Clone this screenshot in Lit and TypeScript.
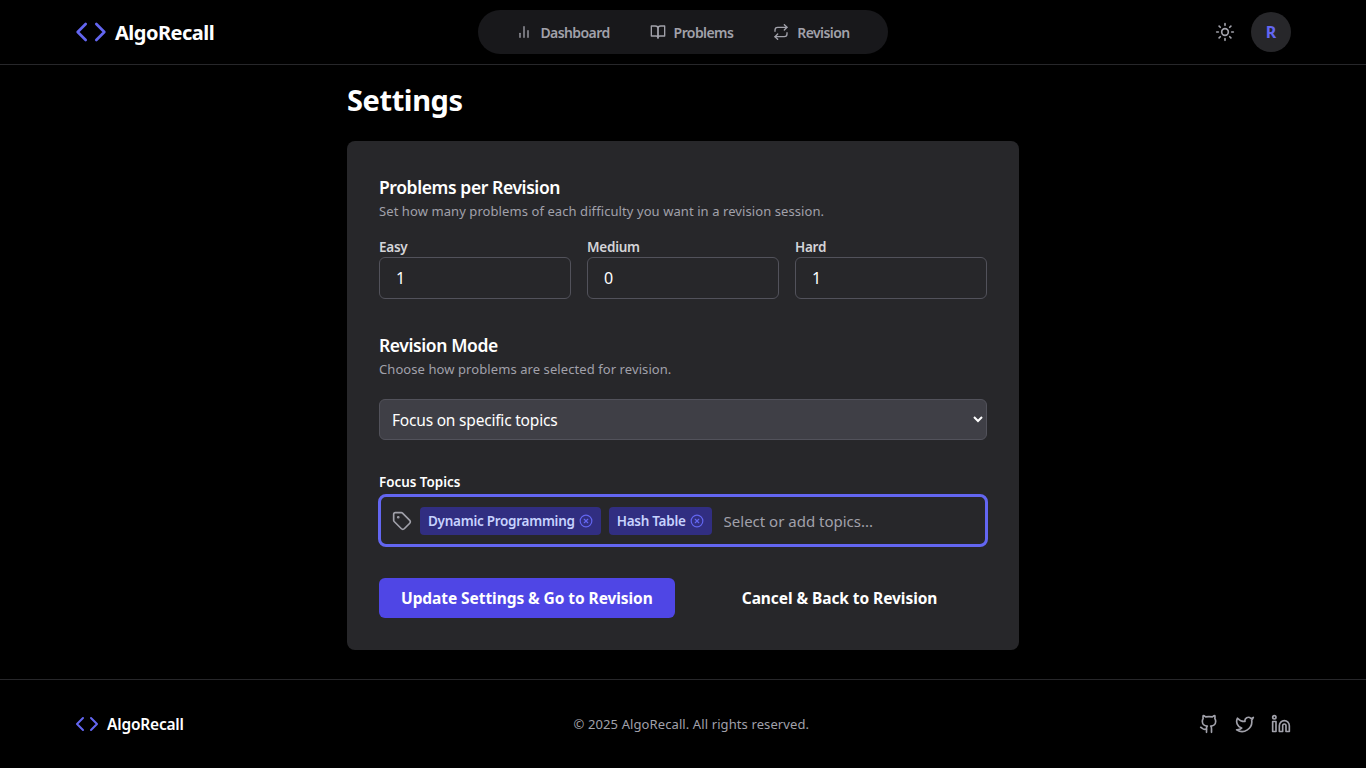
import { LitElement, css, html, svg } from 'lit';
import { customElement } from 'lit/decorators.js';

const codeIcon = (size: number) => html`<svg class="code" width=${size} height=${size} viewBox="0 0 24 24" fill="none" stroke="currentColor" stroke-width="2" stroke-linecap="round" stroke-linejoin="round"><path d="M8 6l-6 6 6 6"></path><path d="M16 6l6 6-6 6"></path></svg>`;

const icon = (size: number, body: unknown) => html`<svg width=${size} height=${size} viewBox="0 0 24 24" fill="none" stroke="currentColor" stroke-width="2" stroke-linecap="round" stroke-linejoin="round">${body}</svg>`;

const chart = svg`<path d="M18 20V10"></path><path d="M12 20V4"></path><path d="M6 20v-6"></path>`;
const book = svg`<path d="M2 3h6a4 4 0 0 1 4 4v14a3 3 0 0 0-3-3H2z"></path><path d="M22 3h-6a4 4 0 0 0-4 4v14a3 3 0 0 1 3-3h7z"></path>`;
const repeat = svg`<path d="M17 1l4 4-4 4"></path><path d="M3 11V9a4 4 0 0 1 4-4h14"></path><path d="M7 23l-4-4 4-4"></path><path d="M21 13v2a4 4 0 0 1-4 4H3"></path>`;
const sun = svg`<circle cx="12" cy="12" r="4"></circle><path d="M12 2v2M12 20v2M4.93 4.93l1.41 1.41M17.66 17.66l1.41 1.41M2 12h2M20 12h2M6.34 17.66l-1.41 1.41M19.07 4.93l-1.41 1.41"></path>`;
const tag = svg`<path d="M12.6 2.6A2 2 0 0 0 11.2 2H4a2 2 0 0 0-2 2v7.2a2 2 0 0 0 .6 1.4l8.7 8.7a2.4 2.4 0 0 0 3.4 0l6.6-6.6a2.4 2.4 0 0 0 0-3.4z"></path><circle cx="7.5" cy="7.5" r=".6" fill="currentColor"></circle>`;
const xCircle = svg`<circle cx="12" cy="12" r="10"></circle><path d="M15 9l-6 6"></path><path d="M9 9l6 6"></path>`;
const github = svg`<path d="M15 22v-4a4.8 4.8 0 0 0-1-3.5c3 0 6-2 6-5.5.08-1.25-.27-2.48-1-3.5.28-1.15.28-2.35 0-3.5 0 0-1 0-3 1.5-2.64-.5-5.36-.5-8 0C6 2 5 2 5 2c-.3 1.15-.3 2.35 0 3.5A5.4 5.4 0 0 0 4 9c0 3.5 3 5.5 6 5.5-.39.49-.68 1.05-.85 1.65-.17.6-.22 1.23-.15 1.85v4"></path><path d="M9 18c-4.51 2-5-2-7-2"></path>`;
const twitter = svg`<path d="M22 4s-.7 2.1-2 3.4c1.6 10-9.4 17.3-18 11.6 2.2.1 4.4-.6 6-2C3 15.5.5 9.6 3 5c2.2 2.6 5.6 4.1 9 4-.9-4.2 4-6.6 7-3.8 1.1 0 3-1.2 3-1.2z"></path>`;
const linkedin = svg`<path d="M16 8a6 6 0 0 1 6 6v7h-4v-7a2 2 0 0 0-2-2 2 2 0 0 0-2 2v7h-4v-7a6 6 0 0 1 6-6z"></path><rect x="2" y="9" width="4" height="12"></rect><circle cx="4" cy="4" r="2"></circle>`;

@customElement('app-root')
export class AppRoot extends LitElement {
  static styles = css`
    :host {
      display: block;
      min-height: 768px;
      background: #000;
      color: #fff;
      font-family: 'Noto Sans', 'Open Sans', sans-serif;
    }
    * {
      box-sizing: border-box;
    }
    header {
      height: 65px;
      border-bottom: 1px solid #27272a;
    }
    .bar {
      max-width: 1280px;
      height: 64px;
      margin: 0 auto;
      padding: 0 32px;
      display: flex;
      align-items: center;
      justify-content: space-between;
    }
    .logo {
      display: flex;
      align-items: center;
      gap: 8px;
      width: 232px;
      font-size: 20px;
      font-weight: 700;
      letter-spacing: -0.5px;
    }
    .code {
      color: #6366f1;
      display: block;
    }
    nav {
      display: flex;
      align-items: center;
      justify-content: center;
      width: 410px;
      height: 44px;
      gap: 40px;
      border-radius: 22px;
      background: #18181b;
      color: #a1a1aa;
      font-size: 14px;
      font-weight: 600;
    }
    nav a {
      display: flex;
      align-items: center;
      gap: 8px;
      letter-spacing: -0.58px;
    }
    .actions {
      display: flex;
      align-items: center;
      justify-content: flex-end;
      gap: 16px;
      width: 232px;
      color: #a1a1aa;
    }
    .avatar {
      width: 40px;
      height: 40px;
      border-radius: 50%;
      background: #27272a;
      color: #6366f1;
      display: flex;
      align-items: center;
      justify-content: center;
      font-size: 16px;
      font-weight: 700;
    }
    main {
      width: 672px;
      margin: 0 auto;
      height: 614px;
      padding-top: 16px;
    }
    h1 {
      margin: 0 0 22px;
      font-size: 29px;
      line-height: 38px;
      font-weight: 700;
      letter-spacing: -0.4px;
    }
    .card {
      background: #27272a;
      border-radius: 8px;
      padding: 32px;
      height: 509px;
    }
    h2 {
      margin: 0;
      font-size: 17.5px;
      line-height: 28px;
      font-weight: 600;
      letter-spacing: -0.4px;
    }
    .hint {
      margin: 0;
      font-size: 13px;
      line-height: 20px;
      color: #a1a1aa;
      letter-spacing: 0.08px;
    }
    .counts {
      display: grid;
      grid-template-columns: repeat(3, 1fr);
      gap: 16px;
      margin-top: 16px;
      margin-bottom: 32px;
    }
    label {
      display: block;
      font-size: 13.5px;
      line-height: 20px;
      font-weight: 600;
      color: #d4d4d8;
      letter-spacing: -0.25px;
    }
    input.count {
      display: block;
      width: 100%;
      height: 42px;
      padding: 0 16px;
      background: #27272a;
      border: 1px solid #52525b;
      border-radius: 6px;
      color: #fff;
      font: inherit;
      font-size: 16px;
    }
    select {
      display: block;
      width: 100%;
      height: 41px;
      margin-top: 20px;
      padding: 0 8px;
      background: #3f3f46;
      border: 1px solid #52525b;
      border-radius: 6px;
      color: #fff;
      font: inherit;
      font-size: 15.5px;
      letter-spacing: -0.2px;
    }
    .focus-label {
      margin-top: 32px;
      color: #fff;
      font-size: 13.4px;
      line-height: 20px;
      font-weight: 600;
      letter-spacing: 0;
    }
    .topics {
      margin: 2px -1px 0;
      height: 53px;
      display: flex;
      align-items: center;
      gap: 8px;
      padding: 0 11px;
      border: 3px solid #6366f1;
      border-radius: 8px;
      color: #a1a1aa;
    }
    .topics > svg {
      flex: none;
    }
    .chip {
      display: flex;
      align-items: center;
      gap: 4px;
      height: 28px;
      padding: 0 8px;
      border-radius: 4px;
      background: #312e81;
      color: #c7d2fe;
      font-size: 13.5px;
      font-weight: 600;
      letter-spacing: -0.27px;
      white-space: nowrap;
    }
    .chip svg {
      color: #6366f1;
    }
    .topics input {
      flex: 1;
      min-width: 0;
      margin-left: 2px;
      border: 0;
      outline: 0;
      background: none;
      color: #fff;
      font: inherit;
      font-size: 15px;
    }
    .topics input::placeholder {
      color: #a1a1aa;
      opacity: 1;
    }
    .buttons {
      display: flex;
      align-items: center;
      gap: 16px;
      margin-top: 31px;
    }
    button {
      flex: none;
      height: 40px;
      padding: 0 22px;
      border: 0;
      border-radius: 6px;
      background: none;
      color: #fff;
      font: inherit;
      font-size: 15.5px;
      font-weight: 700;
      letter-spacing: -0.07px;
      white-space: nowrap;
    }
    button.primary {
      background: #4f46e5;
    }
    button.plain {
      padding: 0 48px 0 51px;
    }
    footer {
      height: 89px;
      border-top: 1px solid #27272a;
    }
    .foot {
      max-width: 1280px;
      height: 88px;
      margin: 0 auto;
      padding: 0 32px;
      display: flex;
      align-items: center;
      justify-content: space-between;
    }
    .foot .logo {
      width: auto;
      font-size: 15.5px;
      font-weight: 600;
      letter-spacing: -0.2px;
    }
    .copy {
      font-size: 13px;
      color: #a1a1aa;
      letter-spacing: 0.1px;
    }
    .social {
      display: flex;
      gap: 16px;
      color: #a1a1aa;
    }
  `;

  render() {
    return html`
      <header>
        <div class="bar">
          <div class="logo">${codeIcon(32)}<span>AlgoRecall</span></div>
          <nav>
            <a>${icon(16, chart)}Dashboard</a>
            <a>${icon(16, book)}Problems</a>
            <a>${icon(16, repeat)}Revision</a>
          </nav>
          <div class="actions">
            ${icon(20, sun)}
            <div class="avatar">R</div>
          </div>
        </div>
      </header>
      <main>
        <h1>Settings</h1>
        <div class="card">
          <h2>Problems per Revision</h2>
          <p class="hint">Set how many problems of each difficulty you want in a revision session.</p>
          <div class="counts">
            <div><label>Easy</label><input class="count" type="text" value="1" /></div>
            <div><label>Medium</label><input class="count" type="text" value="0" /></div>
            <div><label>Hard</label><input class="count" type="text" value="1" /></div>
          </div>
          <h2>Revision Mode</h2>
          <p class="hint">Choose how problems are selected for revision.</p>
          <select>
            <option>Focus on specific topics</option>
          </select>
          <label class="focus-label">Focus Topics</label>
          <div class="topics">
            ${icon(20, tag)}
            <span class="chip">Dynamic Programming ${icon(14, xCircle)}</span>
            <span class="chip">Hash Table ${icon(14, xCircle)}</span>
            <input placeholder="Select or add topics..." />
          </div>
          <div class="buttons">
            <button class="primary">Update Settings &amp; Go to Revision</button>
            <button class="plain">Cancel &amp; Back to Revision</button>
          </div>
        </div>
      </main>
      <footer>
        <div class="foot">
          <div class="logo">${codeIcon(24)}<span>AlgoRecall</span></div>
          <div class="copy">© 2025 AlgoRecall. All rights reserved.</div>
          <div class="social">
            ${icon(20, github)}
            ${icon(20, twitter)}
            ${icon(20, linkedin)}
          </div>
        </div>
      </footer>
    `;
  }
}
